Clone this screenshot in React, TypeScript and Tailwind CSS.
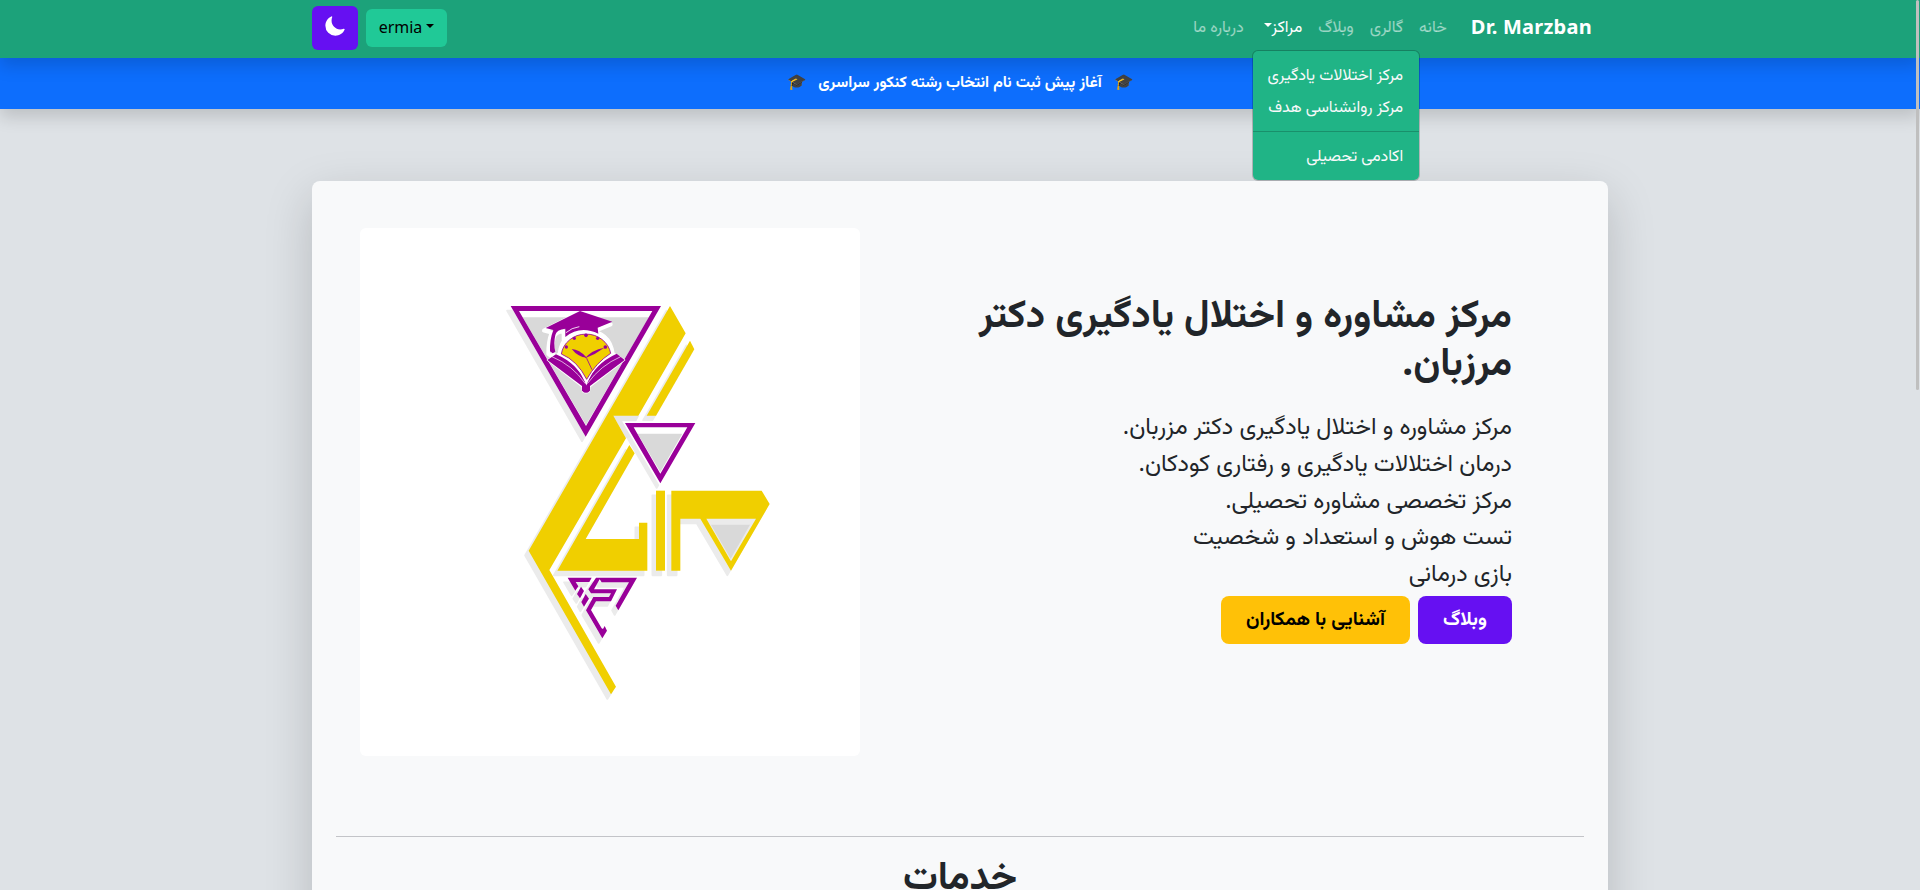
import React from "react";
import { IoMoon } from "react-icons/io5";

const navItems = ["خانه", "گالری", "وبلاگ"];
const lead = [
  "مرکز مشاوره و اختلال یادگیری دکتر مزربان.",
  "درمان اختلالات یادگیری و رفتاری کودکان.",
  "مرکز تخصصی مشاوره تحصیلی.",
  "تست هوش و استعداد و شخصیت",
  "بازی درمانی",
];

function Caret() {
  return <span className="inline-block h-0 w-0 border-x-[4.8px] border-t-[4.8px] border-x-transparent border-t-current align-[5px]" />;
}

function Shapes() {
  return (
    <>
      <path d="M540 48 587 130 445 377H370L408 445 178 840 378 1190 363 1213 116 782Z" />
      <path d="M600 152 613 178 498 377H470Z" />
      <path d="M418 465 434 490 287 747H447V698H472V842H202Z" />
      <path d="M498 602H525V842H498Z" />
      <path fillRule="evenodd" d="M544 602H815L839 642 723 842 631 686H571V842H544ZM649 686H798L723 814Z" />
    </>
  );
}

function Triangles() {
  return (
    <>
      <path fillRule="evenodd" d="M62 48H513L287 440ZM87 63 288 408 487 63Z" />
      <path fillRule="evenodd" d="M405 399H616L511 580ZM431 412 511 551 592 412Z" />
    </>
  );
}

function Glyph() {
  return (
    <g transform="translate(30 510)">
      <path d="M203 353H275L268 366H227L235 379 226 392Z" />
      <path d="M243 380 252 393 240 415 231 402Z" />
      <path d="M257 402 267 416 252 440 244 426Z" />
      <path d="M288 353H411L355 451 347 437 387 367H305L299 358 282 388H351L333 424H288L273 450 305 505 309 507 314 498 321 512 307 535 258 451 280 411H327L333 400H273L265 388Z" />
    </g>
  );
}

function Emblem() {
  const cap = "M167 114 270 63 367 95 323 113 325 131Q270 105 226 141L226 116Q199 119 196 135Q190 160 196 186L188 190 180 184Q179 148 190 120Z";
  return (
    <g>
      <path d={cap} transform="translate(-5 8)" fill="none" stroke="#fff" strokeWidth="12" strokeLinejoin="round" />
      <path d="M172 210 205 190Q214 120 288 118 362 120 372 190L404 210 300 290 298 305Q288 312 278 305L276 290Z" fill="#fff" stroke="#fff" strokeWidth="4" strokeLinejoin="round" />
      <path d={cap} fill="#990099" />
      <path d="M228 128Q245 113 268 110" fill="none" stroke="#fff" strokeWidth="2.5" />
      <path d="M172 210 198 193Q265 222 289 282 313 222 380 191L404 210 300 288V302Q288 315 276 302V288Z" fill="#990099" />
      <path d="M186 200Q248 226 286 281M392 200Q332 226 292 281" fill="none" stroke="#fff" strokeWidth="2" />
      <path d="M212 190Q268 220 289 273 310 220 365 190" fill="none" stroke="#fff" strokeWidth="10" />
      <path d="M214 192A75 70 0 0 1 362 190Q318 218 290 268 262 212 214 192Z" fill="#f0cf00" stroke="#990099" strokeWidth="2.5" />
      <g fill="#990099">
        <circle cx="229" cy="171" r="5" />
        <circle cx="253" cy="145" r="5" />
        <circle cx="288" cy="136" r="5.5" />
        <circle cx="323" cy="145" r="5" />
        <circle cx="346" cy="171" r="5.5" />
        <path d="M245 177Q268 178 290 203 264 201 245 177Z" />
        <path d="M285 205Q305 180 343 173 318 192 285 205Z" />
      </g>
      <path d="M275 190 290 205 306 239" fill="none" stroke="#990099" strokeWidth="2.5" />
    </g>
  );
}

function Logo() {
  return (
    <svg viewBox="360 228 500 528" className="h-full w-full">
      <g transform="translate(490 290) scale(.33333)">
        <g transform="translate(-11 14)" fill="#ebebeb" stroke="#ebebeb" strokeWidth="5" strokeLinejoin="round">
          <Shapes />
          <Triangles />
          <Glyph />
        </g>
        <path d="M370 378H447L438 395H400L425 440 408 445Z" fill="#e6e6e6" />
        <path d="M62 48H513L287 440Z" fill="#fff" />
        <path d="M405 399H616L511 580Z" fill="#fff" stroke="#fff" strokeWidth="10" />
        <path d="M649 686H798L723 814Z" fill="#ebebeb" />
        <path d="M98 82H477L288 405ZM443 431H577L511 546ZM663 704H780L722 806Z" fill="#d9d9d9" />
        <g fill="#f0cf00"><Shapes /></g>
        <g fill="#990099">
          <Triangles />
          <Glyph />
        </g>
        <Emblem />
      </g>
    </svg>
  );
}

export default function App() {
  return (
    <div dir="rtl" className="relative h-[890px] w-full overflow-hidden bg-[#dee2e6] font-['Noto_Sans','Vazirmatn',sans-serif] text-base text-[#212529]">
      <nav className="relative z-20 h-[58px] bg-[#1ca27a] pb-0.5 shadow-[0_8px_16px_rgba(0,0,0,0.15)]">
        <div className="mx-auto flex h-full w-[1296px] items-center pr-4">
          <div className="ml-4 pb-0.5 text-xl font-bold tracking-[0.25px] text-white">Dr. Marzban</div>
          <div className="flex flex-1 text-white/55">
            {navItems.map((t) => <a key={t} className="px-2 pb-2.5 pt-1.5">{t}</a>)}
            <div className="relative whitespace-nowrap px-2 pb-2.5 pt-1.5 text-white">
              مراکز<span className="ml-1"><Caret /></span>
              <div className="absolute right-[-110px] top-[42px] w-[168px] rounded-md border border-black/20 bg-[#20b486] bg-clip-padding py-2 text-[#f8f9fa]">
                <div className="px-4 pb-[5px] pt-[3px]">مرکز اختلالات یادگیری</div>
                <div className="px-4 pb-[5px] pt-[3px]">مرکز روانشناسی هدف</div>
                <div className="my-2 h-px bg-black/20" />
                <div className="px-4 pb-[5px] pt-[3px]">اکادمی تحصیلی</div>
              </div>
            </div>
            <a className="px-2 pb-2.5 pt-1.5">درباره ما</a>
          </div>
          <button className="ml-2 flex h-[38px] w-[81px] items-center justify-center gap-1 rounded-md bg-[#20c997] pb-0.5 text-black" dir="ltr">
            ermia<span><Caret /></span>
          </button>
          <button className="flex h-[44px] w-[46px] items-center justify-center rounded-md bg-[#6610f2] pb-1 text-white">
            <IoMoon size={22} />
          </button>
        </div>
      </nav>
      <div className="relative z-10 flex h-[51px] items-center justify-center gap-3 bg-[#0d6efd] pb-1 text-[15.6px] font-bold text-white shadow-[0_8px_16px_rgba(0,0,0,0.15)]">
        <span>🎓</span>
        <span>آغاز پیش ثبت نام انتخاب رشته کنکور سراسری</span>
        <span>🎓</span>
      </div>
      <main className="mx-auto mt-[72px] h-[900px] w-[1296px] rounded-lg bg-[#f8f9fa] px-6 pt-[47px] shadow-[0_16px_48px_rgba(0,0,0,0.175)]">
        <div className="flex h-[528px] justify-between pl-6 pr-[72px]">
          <div className="w-[560px] pt-[60px]">
            <h1 className="text-[38.9px] font-bold leading-[48px]">مرکز مشاوره و اختلال یادگیری دکتر مرزبان.</h1>
            <div className="mt-[23px] text-[23.8px]">
              {lead.map((t) => <p key={t} className="leading-[36.75px]">{t}</p>)}
            </div>
            <div className="mt-[5px] flex gap-2 text-[19.3px] font-bold">
              <button className="h-12 w-[94px] rounded-lg bg-[#6610f2] pb-0.5 text-white">وبلاگ</button>
              <button className="h-12 w-[189px] rounded-lg bg-[#ffc107] pb-0.5 text-black">آشنایی با همکاران</button>
            </div>
          </div>
          <div className="h-[528px] w-[500px] overflow-hidden rounded-md bg-white"><Logo /></div>
        </div>
        <div className="mt-20 h-px bg-[#c3c4c8]" />
        <h2 className="mt-[13px] text-center text-[38.9px] font-bold leading-[48px]">خدمات</h2>
      </main>
      <div className="absolute left-[1916px] top-0 z-30 h-[390px] w-[3px] rounded-full bg-[#bfbfbf]" />
    </div>
  );
}
